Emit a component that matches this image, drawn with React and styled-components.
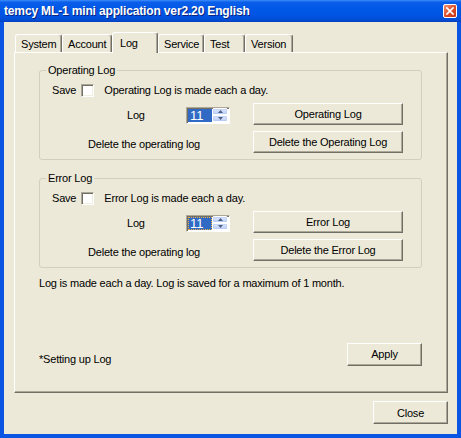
import React from "react";
import styled, { createGlobalStyle } from "styled-components";

const GlobalStyle = createGlobalStyle`
  * { box-sizing: border-box; }
  html, body { margin: 0; padding: 0; }
  body {
    width: 461px;
    height: 438px;
    overflow: hidden;
    background: #ece9d8;
    font-family: "Liberation Sans", Arial, sans-serif;
    font-size: 11px;
    letter-spacing: -0.2px;
    color: #000;
  }
`;

const Window = styled.div`
  display: flex;
  flex-direction: column;
  width: 461px;
  height: 438px;
`;

const TitleBar = styled.div`
  display: flex;
  align-items: center;
  justify-content: space-between;
  height: 22px;
  padding: 0 4px;
  background: linear-gradient(
    to bottom,
    #3d8dfb 0%,
    #0a5eea 10%,
    #0058e6 40%,
    #0054e3 70%,
    #004bd4 92%,
    #0a3fb8 100%
  );
`;

const Title = styled.span`
  color: #fff;
  font-weight: bold;
  font-size: 12px;
  letter-spacing: -0.15px;
  text-shadow: 1px 1px 0 #0a2480;
`;

const CloseBox = styled.div`
  width: 14px;
  height: 14px;
  border: 1px solid #fff;
  border-radius: 2px;
  background: linear-gradient(135deg, #f29476 0%, #de4c25 55%, #c43816 100%);
  display: flex;
  align-items: center;
  justify-content: center;
`;

const Frame = styled.div`
  flex: 1;
  display: flex;
  flex-direction: column;
  min-height: 0;
  border: 4px solid #0a55e4;
  border-top: 0;
  background: #ece9d8;
  padding: 10px 9px 10px 10px;
`;

const TabStrip = styled.div`
  display: flex;
  align-items: flex-end;
  height: 20px;
  padding-left: 1px;
`;

const Tab = styled.div`
  position: relative;
  z-index: ${(p) => (p.$active ? 1 : 0)};
  width: ${(p) => p.$w}px;
  height: ${(p) => (p.$active ? 21 : 18)}px;
  margin-bottom: ${(p) => (p.$active ? -1 : 0)}px;
  padding: ${(p) => (p.$active ? "0 7px 1px" : "0 5px")};
  display: flex;
  align-items: center;
  background: #ece9d8;
  border-top: 1px solid #fff;
  border-left: 1px solid #fff;
  border-right: 1px solid #716f64;
  box-shadow: inset -1px 0 #aca899;
  border-radius: 3px 3px 0 0;
  white-space: nowrap;
`;

const Panel = styled.div`
  flex: 1;
  display: flex;
  flex-direction: column;
  border: 1px solid;
  border-color: #fff #716f64 #716f64 #fff;
  box-shadow: inset -1px -1px #aca899;
  padding: 17px 25px 26px 24px;
`;

const GroupBox = styled.div`
  border: 1px solid #d0d0bf;
  border-radius: 3px;
  padding: 0 0 6px 12px;
  & + & {
    margin-top: 18px;
  }
`;

const Legend = styled.div`
  width: fit-content;
  margin: -7px 0 0 -6px;
  padding: 0 2px;
  background: #ece9d8;
  line-height: 13px;
`;

const SaveRow = styled.div`
  display: flex;
  align-items: center;
  height: 13px;
  margin-top: 7px;
  line-height: 13px;
`;

const CheckBox = styled.span`
  width: 13px;
  height: 13px;
  margin: 0 10px 0 5px;
  background: #fff;
  border: 1px solid;
  border-color: #aca899 #fff #fff #aca899;
  box-shadow: inset 1px 1px #716f64, inset -1px -1px #f1efe2;
`;

const ControlGrid = styled.div`
  display: grid;
  grid-template-columns: 201px 150px;
  grid-auto-rows: 22px;
  row-gap: 6px;
  margin-top: 6px;
`;

const LeftCell = styled.div`
  display: flex;
  align-items: center;
  line-height: 13px;
  padding: ${(p) => p.$top}px 0 0 ${(p) => p.$indent}px;
`;

const LogLabel = styled.span`
  width: 59px;
`;

const Spin = styled.div`
  display: flex;
  width: 44px;
  height: 17px;
  padding: 1px;
  background: #fff;
  border: 1px solid;
  border-color: #aca899 #fff #fff #aca899;
  box-shadow: inset 1px 1px #716f64;
`;

const SpinValue = styled.div`
  width: 24px;
  height: 13px;
  padding-left: 2px;
  background: #316ac5;
  color: #fff;
  font-size: 13px;
  line-height: 13px;
  letter-spacing: 0;
  outline: ${(p) => (p.$focus ? "1px dotted #f0b040" : "none")};
  outline-offset: -1px;
`;

const SpinArrows = styled.div`
  display: flex;
  flex-direction: column;
  width: 16px;
  margin-top: -1px;
  height: 14px;
`;

const SpinButton = styled.div`
  flex: 1;
  display: flex;
  align-items: center;
  justify-content: center;
  border: 1px solid #fff;
  border-radius: 2px;
  background: linear-gradient(to bottom, #dfe8fc, #bccff6);
  box-shadow: inset 0 0 0 0.5px #b1c5f3;
`;

const Button = styled.button`
  width: ${(p) => p.$w || 150}px;
  height: ${(p) => p.$h || 22}px;
  padding: 0;
  font: inherit;
  letter-spacing: inherit;
  color: #000;
  background: #ece9d8;
  border: 1px solid;
  border-color: #fff #716f64 #716f64 #fff;
  box-shadow: inset -1px -1px #aca899;
`;

const Note = styled.div`
  margin-top: 9px;
  line-height: 13px;
`;

const Footer = styled.div`
  margin-top: auto;
  display: flex;
  justify-content: space-between;
  align-items: flex-end;
  line-height: 13px;
`;

const BottomBar = styled.div`
  display: flex;
  justify-content: flex-end;
  margin-top: 8px;
`;

const tabs = [
  { label: "System", w: 47 },
  { label: "Account", w: 50 },
  { label: "Log", w: 46, active: true },
  { label: "Service", w: 46 },
  { label: "Test", w: 41 },
  { label: "Version", w: 48 },
];

function Arrow({ down }) {
  return (
    <svg width="5" height="3" viewBox="0 0 5 3">
      <path d={down ? "M0 0 L5 0 L2.5 3 Z" : "M0 3 L2.5 0 L5 3 Z"} fill="#4d6185" />
    </svg>
  );
}

function Spinner({ focus }) {
  return (
    <Spin>
      <SpinValue $focus={focus}>11</SpinValue>
      <SpinArrows>
        <SpinButton>
          <Arrow />
        </SpinButton>
        <SpinButton>
          <Arrow down />
        </SpinButton>
      </SpinArrows>
    </Spin>
  );
}

function LogGroup({ title, desc, viewLabel, deleteLabel, focus }) {
  return (
    <GroupBox>
      <Legend>{title}</Legend>
      <SaveRow>
        <span>Save</span>
        <CheckBox />
        <span>{desc}</span>
      </SaveRow>
      <ControlGrid>
        <LeftCell $top={3} $indent={75}>
          <LogLabel>Log</LogLabel>
          <Spinner focus={focus} />
        </LeftCell>
        <Button>{viewLabel}</Button>
        <LeftCell $top={5} $indent={36}>
          Delete the operating log
        </LeftCell>
        <Button>{deleteLabel}</Button>
      </ControlGrid>
    </GroupBox>
  );
}

export default function App() {
  return (
    <>
      <GlobalStyle />
      <Window>
        <TitleBar>
          <Title>temcy ML-1 mini application ver2.20 English</Title>
          <CloseBox>
            <svg width="8" height="8" viewBox="0 0 8 8">
              <path d="M1 1 L7 7 M7 1 L1 7" stroke="#fff" strokeWidth="1.7" strokeLinecap="square" />
            </svg>
          </CloseBox>
        </TitleBar>
        <Frame>
          <TabStrip>
            {tabs.map((t) => (
              <Tab key={t.label} $w={t.w} $active={t.active}>
                {t.label}
              </Tab>
            ))}
          </TabStrip>
          <Panel>
            <LogGroup
              title="Operating Log"
              desc="Operating Log is made each a day."
              viewLabel="Operating Log"
              deleteLabel="Delete the Operating Log"
            />
            <LogGroup
              title="Error Log"
              desc="Error Log is made each a day."
              viewLabel="Error Log"
              deleteLabel="Delete the Error Log"
              focus
            />
            <Note>Log is made each a day. Log is saved for a maximum of 1 month.</Note>
            <Footer>
              <span>*Setting up Log</span>
              <Button $w={75} $h={23}>
                Apply
              </Button>
            </Footer>
          </Panel>
          <BottomBar>
            <Button $w={75} $h={23}>
              Close
            </Button>
          </BottomBar>
        </Frame>
      </Window>
    </>
  );
}
